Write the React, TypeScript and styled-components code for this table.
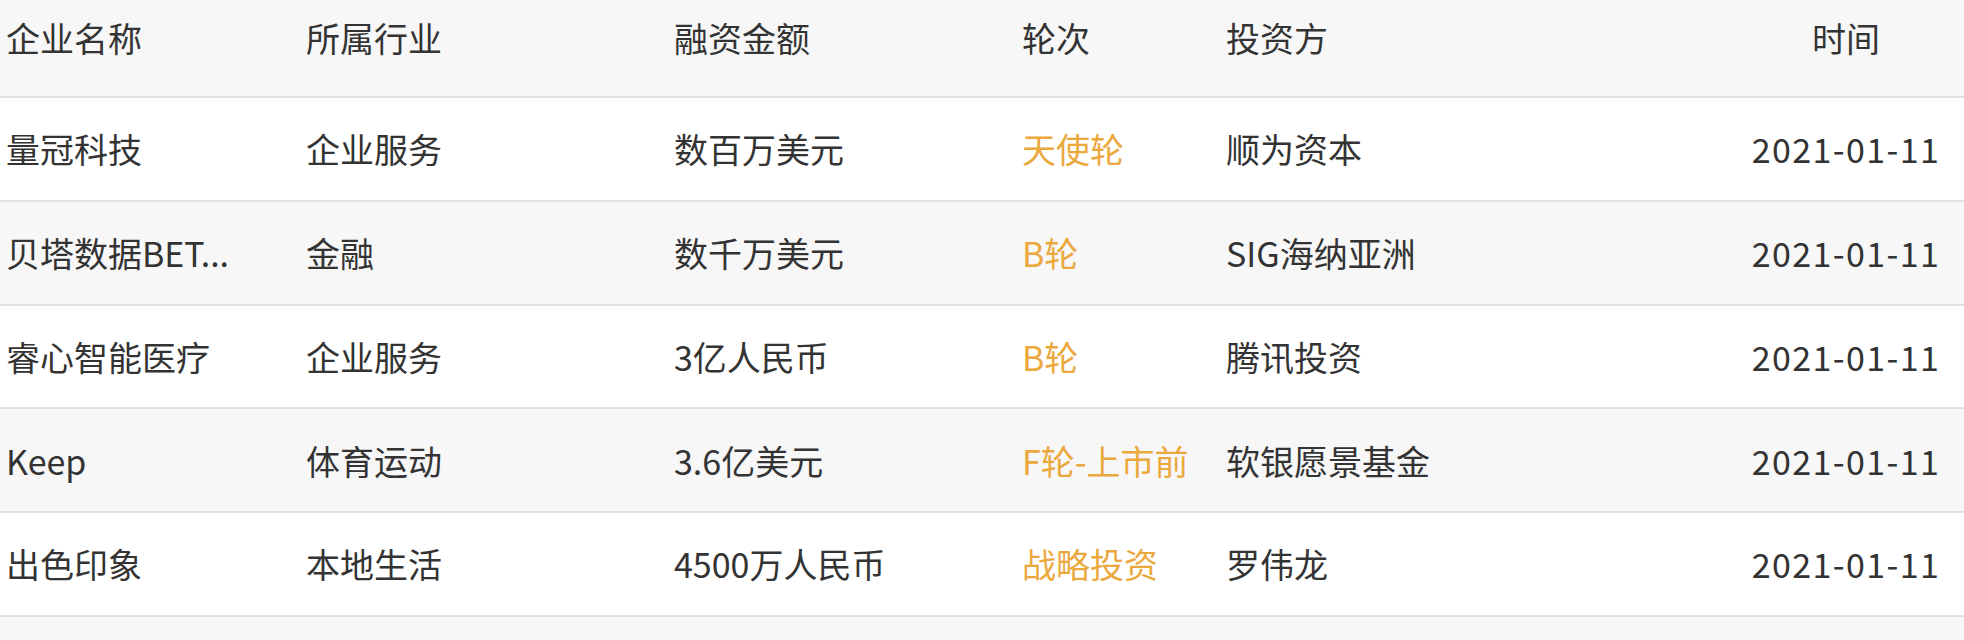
import React from 'react';
import styled, { createGlobalStyle } from 'styled-components';

const GlobalStyle = createGlobalStyle`
    html, body {
        margin: 0;
        padding: 0;
        background: #ffffff;
        overflow: hidden;
    }
    body {
        font-family: "Noto Sans CJK SC", "Noto Sans", sans-serif;
    }
`

const Table = styled.div`
    width: 1964px;
    height: 640px;
    overflow: hidden;
    color: #333333;
    font-size: 34px;
`

const Row = styled.div<{ $striped?: boolean; $header?: boolean }>`
    display: grid;
    grid-template-columns: 300px 368px 348px 204px 502px 1fr;
    align-items: center;
    height: ${props => props.$header ? '98px' : '103.75px'};
    padding: ${props => props.$header ? '0 0 21px 6px' : '0 0 0 6px'};
    box-sizing: border-box;
    background: ${props => props.$striped ? '#f7f7f7' : '#ffffff'};
    border-bottom: 2px solid #e1e1e1;
    box-shadow: 0 1px 0 #f0f0f0;
`

const Cell = styled.div<{ $center?: boolean; $accent?: boolean }>`
    white-space: nowrap;
    text-align: ${props => props.$center ? 'center' : 'left'};
    color: ${props => props.$accent ? '#eba83d' : '#333333'};
    line-height: 1.5;
`

const DateCell = styled(Cell)`
    letter-spacing: 1.4px;
`

interface IDeal {
    name: string
    industry: string
    amount: string
    round: string
    investor: string
    date: string
}

const deals: IDeal[] = [
    { name: '量冠科技', industry: '企业服务', amount: '数百万美元', round: '天使轮', investor: '顺为资本', date: '2021-01-11' },
    { name: '贝塔数据BET...', industry: '金融', amount: '数千万美元', round: 'B轮', investor: 'SIG海纳亚洲', date: '2021-01-11' },
    { name: '睿心智能医疗', industry: '企业服务', amount: '3亿人民币', round: 'B轮', investor: '腾讯投资', date: '2021-01-11' },
    { name: 'Keep', industry: '体育运动', amount: '3.6亿美元', round: 'F轮-上市前', investor: '软银愿景基金', date: '2021-01-11' },
    { name: '出色印象', industry: '本地生活', amount: '4500万人民币', round: '战略投资', investor: '罗伟龙', date: '2021-01-11' },
    { name: '每日优鲜', industry: '电子商务', amount: '数亿美元', round: 'D轮', investor: '腾讯投资', date: '2021-01-11' },
]

function App() {
    return (
        <>
            <GlobalStyle />
            <Table>
                <Row $header $striped>
                    <Cell>企业名称</Cell>
                    <Cell>所属行业</Cell>
                    <Cell>融资金额</Cell>
                    <Cell>轮次</Cell>
                    <Cell>投资方</Cell>
                    <Cell $center>时间</Cell>
                </Row>
                {deals.map((d, i) => (
                    <Row key={i} $striped={i % 2 === 1}>
                        <Cell>{d.name}</Cell>
                        <Cell>{d.industry}</Cell>
                        <Cell>{d.amount}</Cell>
                        <Cell $accent>{d.round}</Cell>
                        <Cell>{d.investor}</Cell>
                        <DateCell $center>{d.date}</DateCell>
                    </Row>
                ))}
            </Table>
        </>
    )
}

export default App
